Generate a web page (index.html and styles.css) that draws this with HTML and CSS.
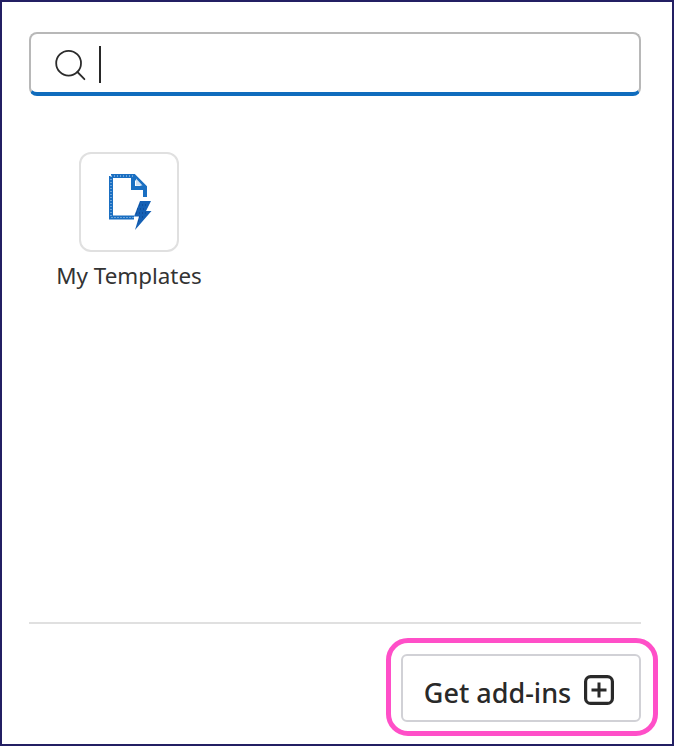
FILE: index.html
```html
<!DOCTYPE html>
<html lang="en">
<head>
<meta charset="utf-8">
<title>Add-ins</title>
<link rel="stylesheet" href="styles.css">
</head>
<body>
<main class="frame">
  <div class="search">
    <svg class="search-icon" width="32" height="32" viewBox="0 0 32 32" fill="none" stroke="#2b2b2b" stroke-width="1.8">
      <circle cx="14.6" cy="14.2" r="12.4"/>
      <path d="M23.4 23 L30.4 30.2" stroke-linecap="round"/>
    </svg>
    <span class="caret"></span>
  </div>
  <div class="grid">
    <div class="tile">
      <div class="tile-box">
        <svg class="file-icon" width="43" height="57" viewBox="0 0 43 57">
          <path d="M2 2 H25 L36 13 V23 M24 2 V14 H36 M2 2 V43.5 H25" fill="none" stroke="#1a6fc2" stroke-width="4"/>
          <path d="M2 2 V43.5 H25 M2 2 H25" fill="none" stroke="#bcd6ee" stroke-width="1" stroke-dasharray="1 2"/>
          <path d="M27 4.5 L33.5 11.5 H27 Z" fill="#cfe0f2"/>
          <path d="M31 27 H42 L37 37 H42.5 L26 56 L30 42.5 H25 Z" fill="#1560b4"/>
          <path d="M30 31 H39 M28 35 H37 M27 39 H38 M30 43 H36 M29 47 H32" fill="none" stroke="#0b3f86" stroke-width="1" stroke-dasharray="1 2"/>
        </svg>
      </div>
      <span class="tile-label">My Templates</span>
    </div>
  </div>
  <div class="divider"></div>
  <div class="footer">
    <div class="highlight">
      <button class="addins" type="button">
        <span>Get add-ins</span>
        <svg width="30" height="30" viewBox="0 0 30 30" fill="none" stroke="#292929" stroke-width="3.2">
          <rect x="1.6" y="1.6" width="26.8" height="26.8" rx="5"/>
          <path d="M15 7.5 V22.5 M7.5 15 H22.5" stroke-width="3"/>
        </svg>
      </button>
    </div>
  </div>
</main>
</body>
</html>
```
FILE: styles.css
```css
* { box-sizing: border-box; }
html, body { margin: 0; padding: 0; }
body { background: #fff; font-family: "Noto Sans", "Open Sans", sans-serif; color: #292929; }
.frame {
  width: 674px;
  height: 746px;
  border: 2px solid #231f63;
  display: flex;
  flex-direction: column;
  padding: 30px 14px 8px 27px;
  overflow: hidden;
  background: #fff;
}
.search {
  width: 612px;
  height: 64px;
  flex: none;
  display: flex;
  align-items: center;
  gap: 13px;
  padding: 0 0 0 23px;
  border: 2px solid #b8b8b8;
  border-bottom: 4px solid #0f6cbd;
  border-radius: 8px;
}
.search-icon { flex: none; margin-top: 4px; }
.caret { width: 2px; height: 37px; background: #292929; margin-top: 3px; }
.grid { flex: 1; display: flex; padding-top: 56px; }
.tile { width: 200px; display: flex; flex-direction: column; align-items: center; }
.tile-box {
  width: 100px;
  height: 100px;
  border: 2px solid #e0e0e0;
  border-radius: 12px;
  display: flex;
  align-items: center;
  justify-content: center;
}
.file-icon { margin-left: 3px; margin-top: 1px; }
.tile-label { margin-top: 9px; font-size: 22.4px; line-height: 30px; white-space: nowrap; color: #333; }
.divider { height: 2px; width: 612px; flex: none; background: #e0e0e0; }
.footer { display: flex; justify-content: flex-end; padding-top: 14px; flex: none; }
.highlight {
  width: 272px;
  height: 98px;
  border: 5px solid #ff4fc8;
  border-radius: 22px;
  padding: 11px 12px 9px 10px;
}
.addins {
  width: 240px;
  height: 68px;
  background: #fff;
  border: 2px solid #d1d1d6;
  border-radius: 6px;
  display: flex;
  align-items: center;
  justify-content: center;
  gap: 13px;
  padding: 8px 4px 0 0;
  font-family: inherit;
  font-size: 27px;
  font-weight: 500;
  color: #292929;
}
.addins svg { margin-top: -4px; }
```
